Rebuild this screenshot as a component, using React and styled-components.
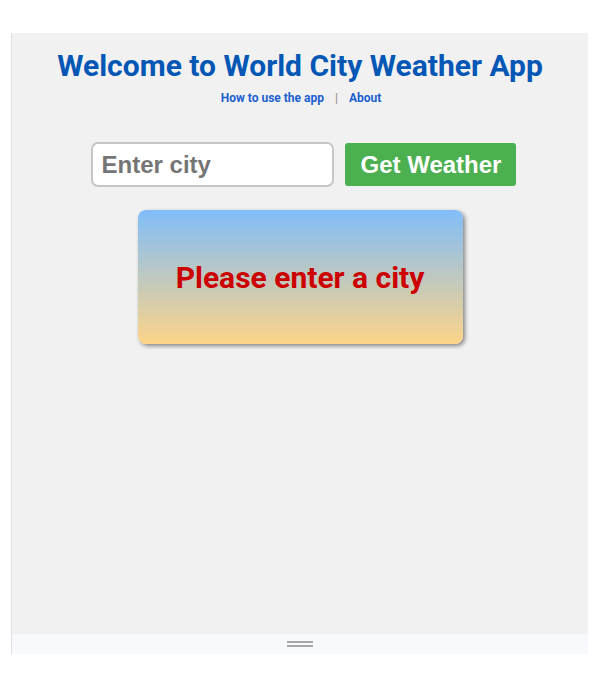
import React, { useState } from 'react';
import styled, { createGlobalStyle } from 'styled-components';

const GlobalStyle = createGlobalStyle`
  html, body {
    margin: 0;
    padding: 0;
    background: #ffffff;
  }
`;

const Page = styled.div`
  padding: 33px 12px 34px 11px;
`;

const Frame = styled.div`
  border-left: 1px solid #dfe1e6;
  width: 576px;
`;

const Panel = styled.main`
  height: 586px;
  background: #f1f1f1;
  padding-top: 15px;
  display: flex;
  flex-direction: column;
  align-items: center;
  font-family: Roboto, "Liberation Sans", sans-serif;
`;

const Title = styled.h1`
  margin: 0;
  font-size: 30px;
  line-height: 36px;
  font-weight: 700;
  color: #0457b5;
`;

const Nav = styled.nav`
  margin-top: 6px;
  margin-left: 2px;
  display: flex;
  align-items: center;
  font-size: 12px;
  line-height: 16px;
  font-weight: 700;
`;

const NavLink = styled.a`
  color: #1c5fcf;
  text-decoration: none;
  cursor: pointer;
`;

const Divider = styled.span`
  color: #8d8a86;
  font-weight: 400;
  margin: 0 11px;
`;

const SearchForm = styled.form`
  margin-top: 36px;
  margin-left: 7px;
  display: flex;
  align-items: center;
  gap: 11px;
`;

const CityInput = styled.input`
  box-sizing: border-box;
  width: 243px;
  height: 45px;
  padding: 0 9px;
  border: 2px solid #c6c6c6;
  border-radius: 7px;
  background: #ffffff;
  font-family: "Liberation Sans", Arial, sans-serif;
  font-size: 24px;
  font-weight: 700;
  color: #333;
  outline: none;

  &::placeholder {
    color: #757575;
  }
`;

const SubmitButton = styled.button`
  box-sizing: border-box;
  height: 43px;
  padding: 0 15px 0 16px;
  border: none;
  border-radius: 3px;
  background: #4caf50;
  color: #ffffff;
  font-family: "Liberation Sans", Arial, sans-serif;
  font-size: 24px;
  font-weight: 700;
  cursor: pointer;
`;

const ResultCard = styled.section`
  margin-top: 23px;
  width: 325px;
  height: 134px;
  border-radius: 8px;
  background: linear-gradient(to bottom, #80bdf9, #fdd488);
  box-shadow: 2px 2px 4px rgba(0, 0, 0, 0.45);
  display: flex;
  align-items: center;
  justify-content: center;
`;

const Message = styled.p`
  margin: 0;
  font-size: 30px;
  font-weight: 700;
  color: #cc0000;
`;

const BottomBar = styled.div`
  height: 20px;
  background: #f8f9fd;
  display: flex;
  flex-direction: column;
  align-items: center;
  justify-content: center;
  gap: 2px;
`;

const Grip = styled.span`
  display: block;
  width: 26px;
  height: 2px;
  background: #a6a6a6;
`;

export default function App() {
  const [city, setCity] = useState('');

  return (
    <>
      <GlobalStyle />
      <Page>
        <Frame>
          <Panel>
            <Title>Welcome to World City Weather App</Title>
            <Nav>
              <NavLink>How to use the app</NavLink>
              <Divider>|</Divider>
              <NavLink>About</NavLink>
            </Nav>
            <SearchForm onSubmit={(e) => e.preventDefault()}>
              <CityInput
                placeholder="Enter city"
                value={city}
                onChange={(e) => setCity(e.target.value)}
              />
              <SubmitButton type="submit">Get Weather</SubmitButton>
            </SearchForm>
            <ResultCard>
              <Message>Please enter a city</Message>
            </ResultCard>
          </Panel>
          <BottomBar>
            <Grip />
            <Grip />
          </BottomBar>
        </Frame>
      </Page>
    </>
  );
}
